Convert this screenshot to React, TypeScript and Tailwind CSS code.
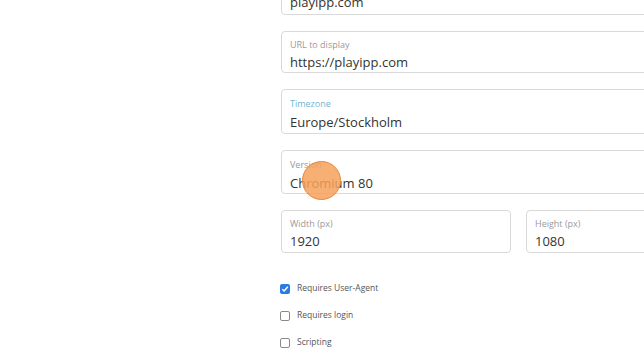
import React from "react";

function Field({ label, value, h, labelClass = "text-[#9a9a9a]", className = "", gap = "mt-[2px]" }: { label?: string; value: string; h: string; labelClass?: string; className?: string; gap?: string }) {
  return (
    <div className={`border border-[#d9d9d9] rounded-[4px] bg-white flex flex-col px-[8px] ${h} ${className}`}>
      {label && <div className={`text-[9px] leading-[12px] ${labelClass}`}>{label}</div>}
      <div className={`text-[13px] leading-[18px] text-[#333] ${gap}`}>{value}</div>
    </div>
  );
}

function Check({ checked, label }: { checked?: boolean; label: string }) {
  return (
    <div className="flex items-center h-[27px]">
      {checked ? (
        <div className="w-[10px] h-[10px] rounded-[2px] bg-[#2b7be0] flex items-center justify-center">
          <svg width="8" height="8" viewBox="0 0 8 8"><path d="M1.3 4.2 L3.2 6 L6.8 1.8" stroke="white" strokeWidth="1.5" fill="none" /></svg>
        </div>
      ) : (
        <div className="w-[10px] h-[10px] rounded-[2px] border border-[#8a8a8a] bg-white" />
      )}
      <span className="ml-[7px] text-[8.5px] text-[#555]">{label}</span>
    </div>
  );
}

export default function App() {
  return (
    <div className="w-[644px] h-[359px] bg-white overflow-hidden relative" style={{ fontFamily: '"Open Sans", sans-serif' }}>
      <div className="pl-[281px] mt-[-29px] flex flex-col gap-[16px] w-[720px]">
        <div className="border border-[#d9d9d9] rounded-[4px] h-[44px] w-[420px] px-[8px] flex flex-col justify-end pb-[3px]">
          <div className="text-[13px] leading-[18px] text-[#333]">playipp.com</div>
        </div>
        <Field label="URL to display" value="https://playipp.com" h="h-[42px] pt-[7px]" className="w-[420px]" />
        <Field label="Timezone" value="Europe/Stockholm" h="h-[45px] pt-[8px]" labelClass="text-[#6fb6d2]" className="w-[420px]" gap="mt-[3px]" />
        <Field label="Version" value="Chromium 80" h="h-[44px] pt-[8px]" className="w-[420px]" gap="mt-[3px]" />
        <div className="flex gap-[15px] w-[475px]">
          <Field label="Width (px)" value="1920" h="h-[43px] pt-[7px]" className="w-[230px]" />
          <Field label="Height (px)" value="1080" h="h-[43px] pt-[7px]" className="w-[230px]" />
        </div>
        <div className="flex flex-col -ml-[1px] mt-[6px]">
          <Check checked label="Requires User-Agent" />
          <Check label="Requires login" />
          <Check label="Scripting" />
        </div>
      </div>
      <div className="absolute left-[302px] top-[161px] w-[39px] h-[39px] rounded-full bg-[#f7a15a]/85 border border-[#e8863a]" />
    </div>
  );
}
